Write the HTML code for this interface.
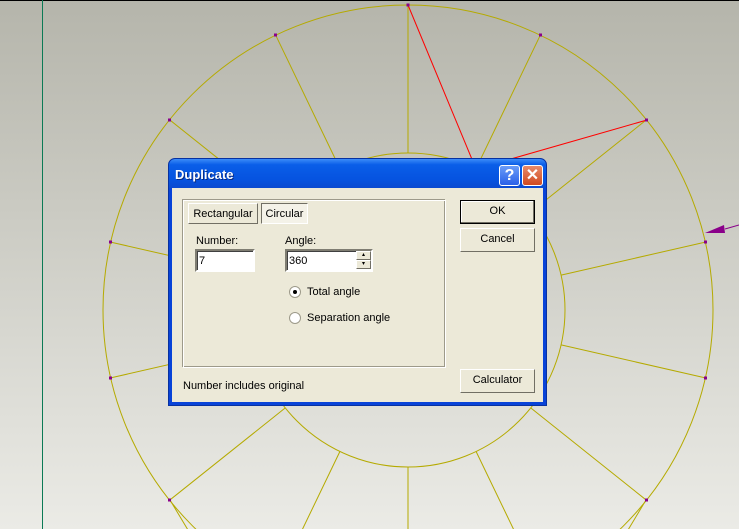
<!DOCTYPE html>
<html><head><meta charset="utf-8"><style>
*{margin:0;padding:0;box-sizing:border-box}
html,body{width:739px;height:529px;overflow:hidden}
body{position:relative;font-family:"Liberation Sans",sans-serif;font-size:11px;color:#000}
svg.bg{position:absolute;left:0;top:0;display:block}
.dlg{position:absolute;left:168px;top:158px;width:379px;height:248px;background:#0843d8;border-radius:7px 7px 0 0;border:1px solid #0831a0;overflow:hidden}
.title{position:absolute;left:0;top:0;right:0;height:29px;border-radius:6px 6px 0 0;background:linear-gradient(#3c8cf8,#0a5ee8 20%,#0653e0 70%,#0a4ad0)}
.title span{position:absolute;left:6px;top:8px;color:#fff;font-weight:bold;font-size:13px;text-shadow:1px 1px #0a2a80}
.body{position:absolute;left:3px;top:29px;right:3px;bottom:3px;background:#ece9d8}
.tb{position:absolute;top:6px;width:21px;height:21px;border:1px solid #fff;border-radius:3px;color:#fff;font-weight:bold;text-align:center}
.a{position:absolute;white-space:nowrap}
.grp{position:absolute;left:11px;top:12px;width:263px;height:168px;border:1px solid #fff;box-shadow:inset -1px -1px #9d9a8a, -1px -1px #9d9a8a}
.tab{position:absolute;top:2px;height:21px;background:#ece9d8;border:1px solid;border-color:#fff #716f64 #716f64 #fff;padding:4px 0 0 0;text-align:center;font-size:11px;white-space:nowrap}
.inp{position:absolute;height:23px;background:#fff;border:2px solid;border-color:#7f7d72 #fff #fff #7f7d72;box-shadow:inset 1px 1px #404040;padding:4px 2px;font-size:11px}
.btn{position:absolute;left:288px;width:75px;height:24px;background:#ece9d8;border:1px solid;border-color:#fff #716f64 #716f64 #fff;text-align:center;line-height:21px;font-size:11px}
.rad{position:absolute;width:12px;height:12px;border-radius:50%;background:#fff;border:1px solid #9d9a8a}
</style></head><body>
<svg class="bg" width="739" height="529">
<defs><linearGradient id="g" x1="0" y1="0" x2="0" y2="1"><stop offset="0" stop-color="#b5b5ab"/><stop offset="1" stop-color="#ebebe6"/></linearGradient></defs>
<rect width="739" height="529" fill="url(#g)"/>
<line x1="0" y1="0.5" x2="739" y2="0.5" stroke="#000"/>
<line x1="42.5" y1="0" x2="42.5" y2="529" stroke="#0b7a55"/>
<g fill="none" stroke="#b5aa00" stroke-width="1">
<circle cx="408" cy="310" r="305"/>
<circle cx="408" cy="310" r="157"/>
<line x1="408" y1="153" x2="408" y2="5"/>
<line x1="339.9" y1="168.5" x2="275.7" y2="35.2"/>
<line x1="285.3" y1="212.1" x2="169.6" y2="119.8"/>
<line x1="254.9" y1="275.1" x2="110.7" y2="242.1"/>
<line x1="254.9" y1="344.9" x2="110.7" y2="377.9"/>
<line x1="285.3" y1="407.9" x2="169.6" y2="500.2"/>
<line x1="339.9" y1="451.5" x2="275.7" y2="584.8"/>
<line x1="408" y1="467" x2="408" y2="615"/>
<line x1="476.1" y1="451.5" x2="540.3" y2="584.8"/>
<line x1="530.7" y1="407.9" x2="646.4" y2="500.2"/>
<line x1="561.1" y1="344.9" x2="705.3" y2="377.9"/>
<line x1="561.1" y1="275.1" x2="705.3" y2="242.1"/>
<line x1="530.7" y1="212.1" x2="646.4" y2="119.8"/>
<line x1="476.1" y1="168.5" x2="540.3" y2="35.2"/>
<line x1="170" y1="500" x2="230" y2="600"/>
<line x1="646" y1="500" x2="586" y2="600"/>
</g>
<line x1="408" y1="5" x2="476" y2="169" stroke="#f00"/>
<line x1="647" y1="120" x2="476" y2="169" stroke="#f00"/>
<g fill="#8a008a">
<rect x="406.5" y="3.5" width="3" height="3"/>
<rect x="274" y="33.5" width="3" height="3"/>
<rect x="168" y="118.5" width="3" height="3"/>
<rect x="109" y="240.5" width="3" height="3"/>
<rect x="109" y="376.5" width="3" height="3"/>
<rect x="168" y="498.5" width="3" height="3"/>
<rect x="645" y="498.5" width="3" height="3"/>
<rect x="704" y="376.5" width="3" height="3"/>
<rect x="704" y="240.5" width="3" height="3"/>
<rect x="645" y="118.5" width="3" height="3"/>
<rect x="539" y="33.5" width="3" height="3"/>
</g>
<line x1="725" y1="229" x2="739" y2="225" stroke="#8a008a"/>
<polygon points="705,233 724,225 725,233" fill="#8a008a"/>
</svg>
<div class="dlg">
<div class="title"><span>Duplicate</span>
<div class="tb" style="left:330px;background:linear-gradient(#6a9cf8,#2a60e8);font-size:16px;line-height:19px">?</div>
<div class="tb" style="left:353px;background:linear-gradient(#e88a6a,#d04a20);font-size:16px;line-height:19px">✕</div>
</div>
<div class="body">
<div class="grp">
<div class="tab" style="left:4px;width:70px">Rectangular</div>
<div class="tab" style="left:77px;width:47px;border-color:#716f64 #fff #fff #716f64;background:#f4f2e8">Circular</div>
<div class="a" style="left:12px;top:34px">Number:</div>
<div class="inp" style="left:11px;top:48px;width:60px">7</div>
<div class="a" style="left:101px;top:34px">Angle:</div>
<div class="inp" style="left:101px;top:48px;width:88px">360</div>
<div class="a" style="left:172px;top:50px;width:15px;height:9px;background:#ece9d8;border:1px solid;border-color:#fff #716f64 #716f64 #fff;font-size:6px;text-align:center;line-height:7px">▴</div>
<div class="a" style="left:172px;top:59px;width:15px;height:9px;background:#ece9d8;border:1px solid;border-color:#fff #716f64 #716f64 #fff;font-size:6px;text-align:center;line-height:7px">▾</div>
<div class="rad" style="left:105px;top:85px"><div style="position:absolute;left:3px;top:3px;width:4px;height:4px;border-radius:50%;background:#000"></div></div>
<div class="a" style="left:123px;top:85px">Total angle</div>
<div class="rad" style="left:105px;top:111px"></div>
<div class="a" style="left:123px;top:111px">Separation angle</div>
</div>
<div class="btn" style="top:12px;border:1px solid #000;box-shadow:inset -1px -1px #716f64,inset 1px 1px #fff">OK</div>
<div class="btn" style="top:40px">Cancel</div>
<div class="btn" style="top:181px">Calculator</div>
<div class="a" style="left:11px;top:192px">Number includes original</div>
</div>
</div>
</body></html>
